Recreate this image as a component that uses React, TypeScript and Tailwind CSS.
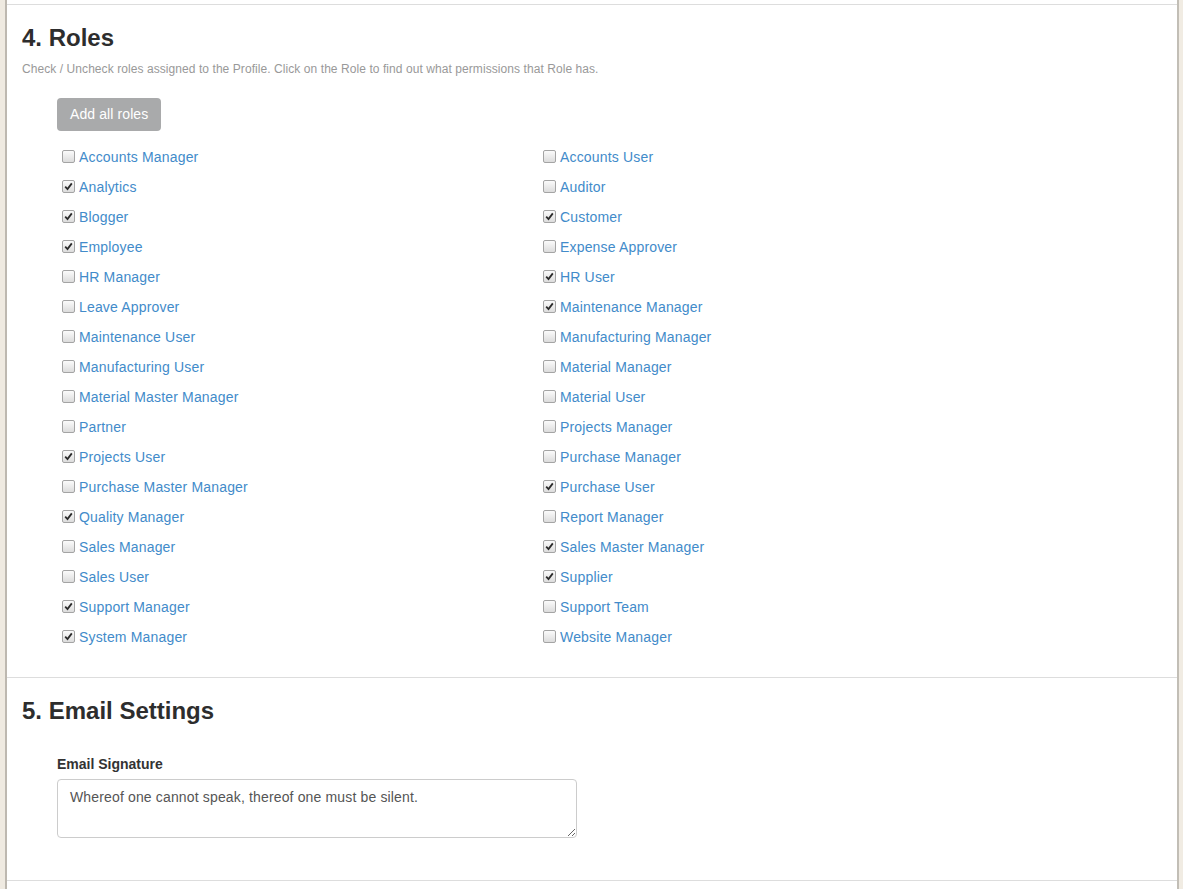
const roles: [string, boolean][] = [
  ["Accounts Manager", false],
  ["Accounts User", false],
  ["Analytics", true],
  ["Auditor", false],
  ["Blogger", true],
  ["Customer", true],
  ["Employee", true],
  ["Expense Approver", false],
  ["HR Manager", false],
  ["HR User", true],
  ["Leave Approver", false],
  ["Maintenance Manager", true],
  ["Maintenance User", false],
  ["Manufacturing Manager", false],
  ["Manufacturing User", false],
  ["Material Manager", false],
  ["Material Master Manager", false],
  ["Material User", false],
  ["Partner", false],
  ["Projects Manager", false],
  ["Projects User", true],
  ["Purchase Manager", false],
  ["Purchase Master Manager", false],
  ["Purchase User", true],
  ["Quality Manager", true],
  ["Report Manager", false],
  ["Sales Manager", false],
  ["Sales Master Manager", true],
  ["Sales User", false],
  ["Supplier", true],
  ["Support Manager", true],
  ["Support Team", false],
  ["System Manager", true],
  ["Website Manager", false],
];

function Check({ on }: { on: boolean }) {
  return (
    <span className="w-[13px] h-[13px] shrink-0 rounded-[2px] border border-[#a4a4a4] bg-gradient-to-b from-[#fbfbfb] to-[#dcdcdc] flex items-center justify-center">
      {on && (
        <svg width="9" height="9" viewBox="0 0 9 9">
          <path d="M1.2 4.6 L3.5 7 L7.8 1.4" fill="none" stroke="#2b2b2b" strokeWidth="1.8" />
        </svg>
      )}
    </span>
  );
}

export default function App() {
  return (
    <div className="flex w-full h-[889px] overflow-hidden font-['Liberation_Sans',Arial,sans-serif] text-[#333]">
      {/* left frame */}
      <div className="w-[7px] shrink-0 flex">
        <div className="w-[5px] bg-[#efeae1]" />
        <div className="w-[2px] bg-[#bdb8b0]" />
      </div>

      <div className="flex-1 bg-white pt-[4px] flex flex-col">
        {/* Roles */}
        <section className="border-t border-[#dddddd] px-[15px] pb-[25px]">
          <h3 className="mt-[20px] mb-[10px] text-[24px] leading-[1.1] font-bold text-[#2d2d2d]">4. Roles</h3>
          <p className="text-[12px] leading-[17px] text-[#999] tracking-[0.07px]">
            Check / Uncheck roles assigned to the Profile. Click on the Role to find out what permissions that Role has.
          </p>
          <div className="pl-[35px] mt-[20px]">
            <button className="h-[33px] px-[13px] rounded-[4px] bg-[#a9aaab] text-white text-[14px] tracking-[0.1px]">Add all roles</button>
            <div className="mt-[11px] pl-[5px] grid grid-cols-[481px_481px]">
              {roles.map(([name, on]) => (
                <div key={name} className="h-[30px] flex items-center gap-[4px]">
                  <span className="-mt-[2px] flex">
                    <Check on={on} />
                  </span>
                  <a className="text-[14px] text-[#428bca] tracking-[0.17px] cursor-pointer">{name}</a>
                </div>
              ))}
            </div>
          </div>
        </section>

        {/* Email settings */}
        <section className="border-t border-[#dddddd] px-[15px] pb-[42px]">
          <h3 className="mt-[20px] text-[24px] leading-[1.1] font-bold text-[#2d2d2d]">5. Email Settings</h3>
          <div className="pl-[35px] mt-[29px]">
            <label className="block text-[14px] leading-[20px] font-bold text-[#333] mb-[5px]">Email Signature</label>
            <textarea
              readOnly
              defaultValue="Whereof one cannot speak, thereof one must be silent."
              className="block w-[520px] h-[59px] border border-[#cccccc] rounded-[4px] px-[12px] py-[7px] text-[14px] leading-[20px] tracking-[0.15px] text-[#555] font-['Liberation_Sans',Arial,sans-serif] outline-none"
            />
          </div>
        </section>
        <div className="border-t border-[#dddddd] flex-1" />
      </div>

      {/* right frame */}
      <div className="w-[6px] shrink-0 flex">
        <div className="w-[2px] bg-[#c2beb6]" />
        <div className="w-[4px] bg-[#f1ece3]" />
      </div>
    </div>
  );
}
